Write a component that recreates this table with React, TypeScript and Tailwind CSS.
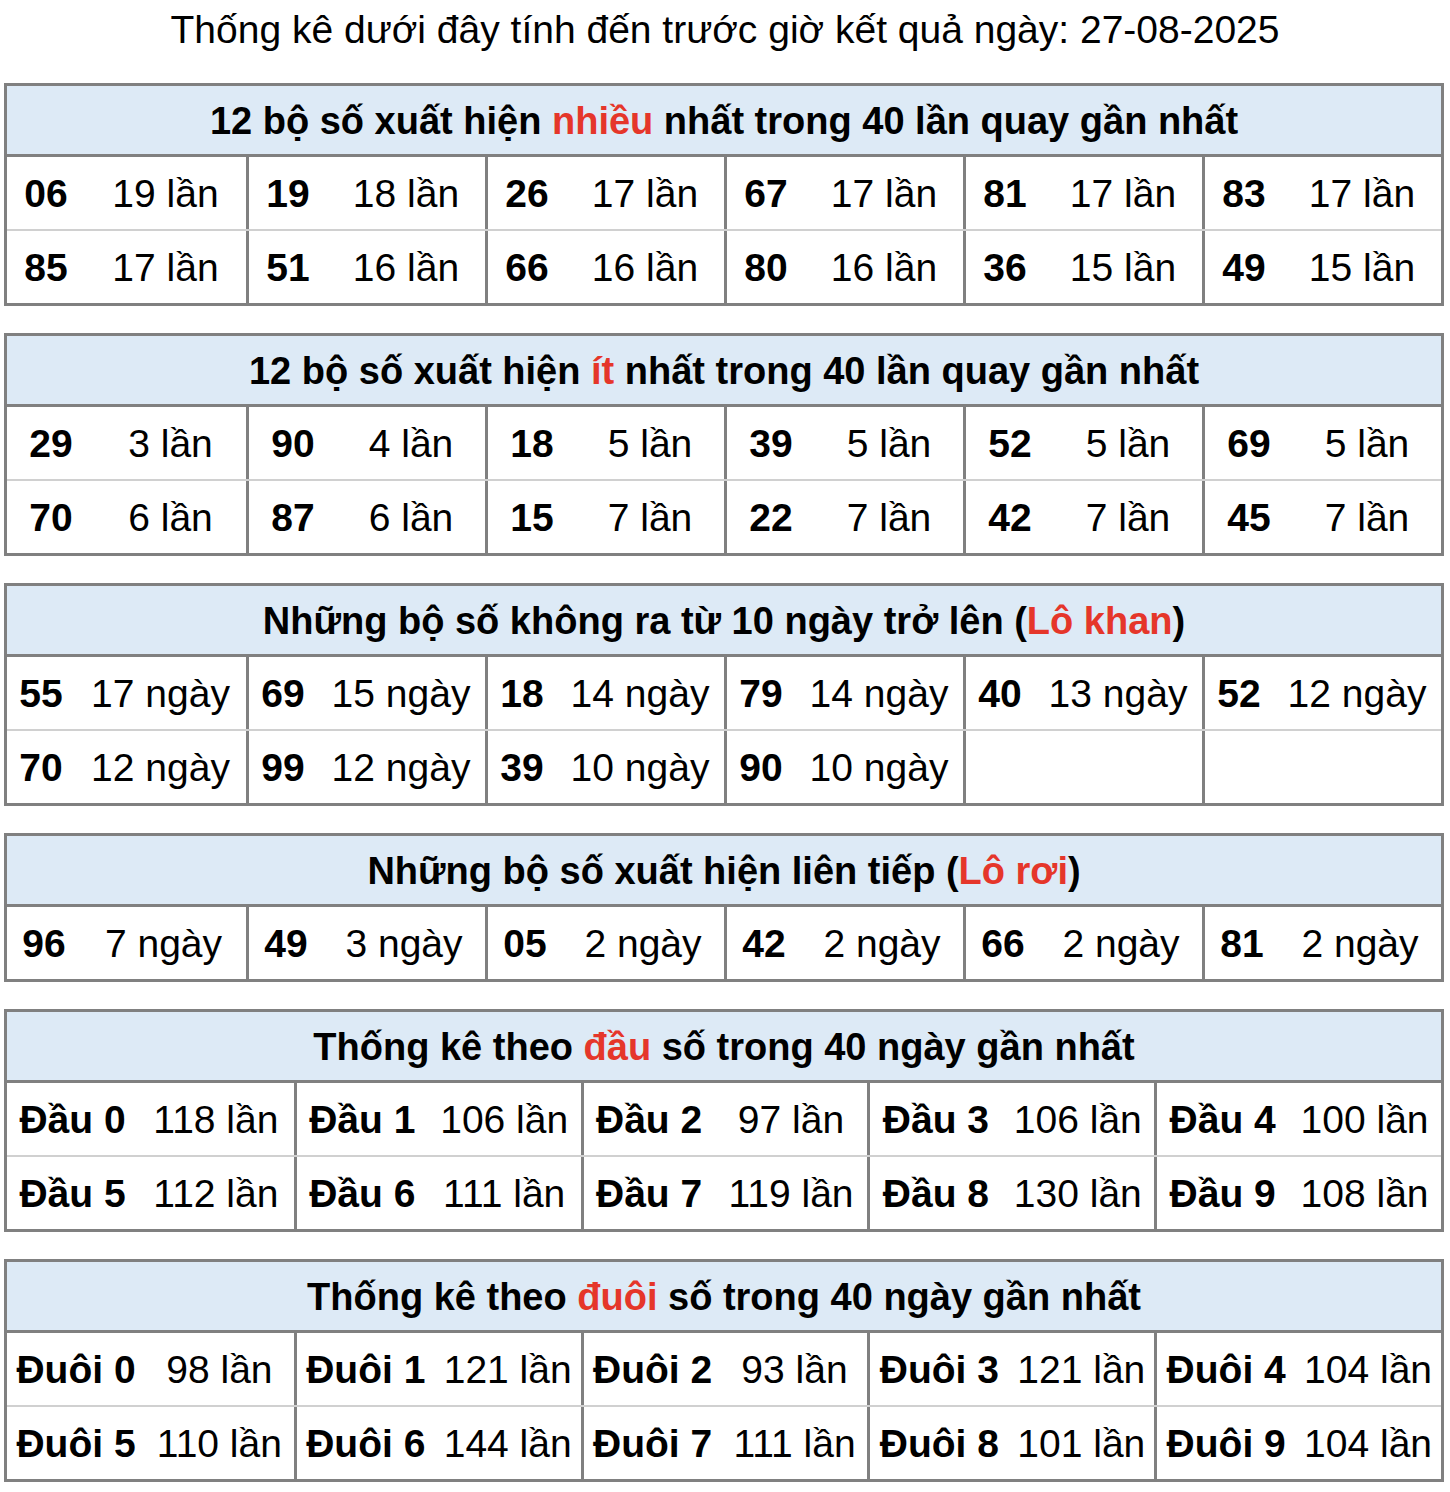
import React from "react";

type Table = {
  title: React.ReactNode;
  cols: string;
  nw: string;
  rows: [string, string][][];
};

const Red = ({ children }: { children: React.ReactNode }) => (
  <span className="text-[#e5362a]">{children}</span>
);

const tables: Table[] = [
  {
    title: (
      <>
        12 bộ số xuất hiện <Red>nhiều</Red> nhất trong 40 lần quay gần nhất
      </>
    ),
    cols: "grid-cols-6",
    nw: "w-[78px]",
    rows: [
      [["06", "19 lần"], ["19", "18 lần"], ["26", "17 lần"], ["67", "17 lần"], ["81", "17 lần"], ["83", "17 lần"]],
      [["85", "17 lần"], ["51", "16 lần"], ["66", "16 lần"], ["80", "16 lần"], ["36", "15 lần"], ["49", "15 lần"]],
    ],
  },
  {
    title: (
      <>
        12 bộ số xuất hiện <Red>ít</Red> nhất trong 40 lần quay gần nhất
      </>
    ),
    cols: "grid-cols-6",
    nw: "w-[88px]",
    rows: [
      [["29", "3 lần"], ["90", "4 lần"], ["18", "5 lần"], ["39", "5 lần"], ["52", "5 lần"], ["69", "5 lần"]],
      [["70", "6 lần"], ["87", "6 lần"], ["15", "7 lần"], ["22", "7 lần"], ["42", "7 lần"], ["45", "7 lần"]],
    ],
  },
  {
    title: (
      <>
        Những bộ số không ra từ 10 ngày trở lên (<Red>Lô khan</Red>)
      </>
    ),
    cols: "grid-cols-6",
    nw: "w-[68px]",
    rows: [
      [["55", "17 ngày"], ["69", "15 ngày"], ["18", "14 ngày"], ["79", "14 ngày"], ["40", "13 ngày"], ["52", "12 ngày"]],
      [["70", "12 ngày"], ["99", "12 ngày"], ["39", "10 ngày"], ["90", "10 ngày"], ["", ""], ["", ""]],
    ],
  },
  {
    title: (
      <>
        Những bộ số xuất hiện liên tiếp (<Red>Lô rơi</Red>)
      </>
    ),
    cols: "grid-cols-6",
    nw: "w-[74px]",
    rows: [
      [["96", "7 ngày"], ["49", "3 ngày"], ["05", "2 ngày"], ["42", "2 ngày"], ["66", "2 ngày"], ["81", "2 ngày"]],
    ],
  },
  {
    title: (
      <>
        Thống kê theo <Red>đầu</Red> số trong 40 ngày gần nhất
      </>
    ),
    cols: "grid-cols-5",
    nw: "w-[131px]",
    rows: [
      [["Đầu 0", "118 lần"], ["Đầu 1", "106 lần"], ["Đầu 2", "97 lần"], ["Đầu 3", "106 lần"], ["Đầu 4", "100 lần"]],
      [["Đầu 5", "112 lần"], ["Đầu 6", "111 lần"], ["Đầu 7", "119 lần"], ["Đầu 8", "130 lần"], ["Đầu 9", "108 lần"]],
    ],
  },
  {
    title: (
      <>
        Thống kê theo <Red>đuôi</Red> số trong 40 ngày gần nhất
      </>
    ),
    cols: "grid-cols-5",
    nw: "w-[138px]",
    rows: [
      [["Đuôi 0", "98 lần"], ["Đuôi 1", "121 lần"], ["Đuôi 2", "93 lần"], ["Đuôi 3", "121 lần"], ["Đuôi 4", "104 lần"]],
      [["Đuôi 5", "110 lần"], ["Đuôi 6", "144 lần"], ["Đuôi 7", "111 lần"], ["Đuôi 8", "101 lần"], ["Đuôi 9", "104 lần"]],
    ],
  },
];

function StatTable({ t }: { t: Table }) {
  return (
    <div className="w-[1440px] border-[3px] border-[#808080] mt-[27px] first:mt-0">
      <div className="h-[71px] flex items-center justify-center bg-[#ddeaf6] border-b-[3px] border-[#808080] font-bold text-[38px]">
        <span className="whitespace-nowrap pt-[2px]">{t.title}</span>
      </div>
      {t.rows.map((row, ri) => (
        <div
          key={ri}
          className={`grid ${t.cols} ${ri > 0 ? "border-t-2 border-[#d0d0d0]" : ""}`}
        >
          {row.map(([num, count], ci) => (
            <div
              key={ci}
              className={`flex items-center h-[72px] ${ci > 0 ? "border-l-[3px] border-[#808080]" : ""}`}
            >
              <span className={`${t.nw} shrink-0 text-center font-bold whitespace-nowrap`}>{num}</span>
              <span className="flex-1 text-center whitespace-nowrap">{count}</span>
            </div>
          ))}
        </div>
      ))}
    </div>
  );
}

export default function App() {
  return (
    <main
      className="w-[1450px] min-h-[1492px] bg-white text-black text-[39px] leading-none"
      style={{ fontFamily: '"Liberation Sans", Arial, sans-serif' }}
    >
      {/* Title */}
      <div className="h-[83px] pt-[10px] text-center text-[39px]">
        Thống kê dưới đây tính đến trước giờ kết quả ngày: 27-08-2025
      </div>

      {/* Tables */}
      <div className="pl-[4px] flex flex-col">
        {tables.map((t, i) => (
          <StatTable key={i} t={t} />
        ))}
      </div>
    </main>
  );
}
